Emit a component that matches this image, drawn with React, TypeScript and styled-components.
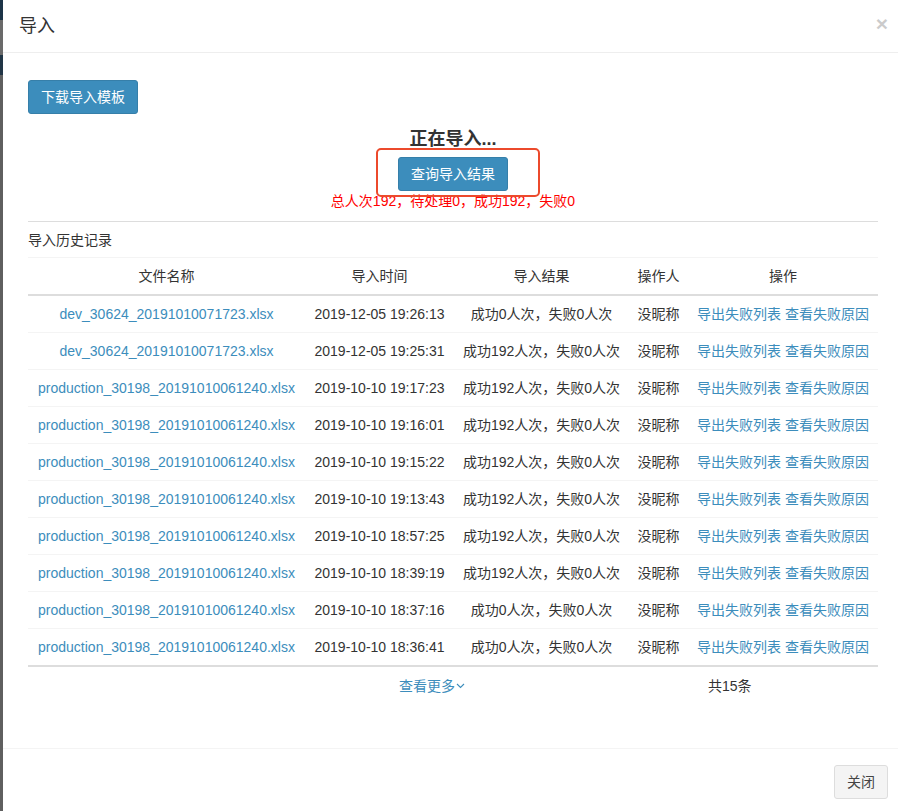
import React from "react";
import styled, { createGlobalStyle } from "styled-components";

const Global = createGlobalStyle`
  html, body { margin: 0; padding: 0; overflow: hidden; background: #5b5b5b; }
  body { font-family: "Liberation Sans", "Noto Sans CJK SC", Arial, sans-serif; color: #333; font-size: 14px; }
  * { box-sizing: border-box; }
`;

const Page = styled.div`
  display: flex;
  width: 898px;
  height: 811px;
  overflow: hidden;
`;

const Backdrop = styled.div`
  flex: 0 0 3px;
  background: linear-gradient(
    to bottom,
    #1d3447 0px, #1d3447 20px,
    #6a6a6a 20px, #6a6a6a 55px,
    #213546 55px, #213546 75px,
    #5f5f5f 75px
  );
`;

const Modal = styled.div`
  flex: 0 0 900px;
  width: 900px;
  background: #fff;
  display: flex;
  flex-direction: column;
`;

const Header = styled.div`
  display: flex;
  align-items: center;
  justify-content: space-between;
  padding: 14px 15px 14px 16px;
  border-bottom: 1px solid #eeeeee;
`;

const Title = styled.h4`
  margin: 0;
  font-size: 18px;
  font-weight: normal;
  line-height: 24px;
  color: #333;
`;

const CloseX = styled.span`
  font-size: 21px;
  font-weight: bold;
  line-height: 18px;
  color: #000;
  opacity: 0.2;
  margin-top: -4px;
`;

const Body = styled.div`
  padding: 27px 25px 52px 25px;
  display: flex;
  flex-direction: column;
  border-bottom: 1px solid #f4f4f4;
`;

const Btn = styled.button<{ $variant?: "primary" | "default" }>`
  font-family: inherit;
  font-size: 14px;
  line-height: 20px;
  padding: 6px 12px;
  border-radius: 3px;
  border: 1px solid ${(p) => (p.$variant === "default" ? "#ddd" : "#367fa9")};
  background: ${(p) => (p.$variant === "default" ? "#f4f4f4" : "#3c8dbc")};
  color: ${(p) => (p.$variant === "default" ? "#444" : "#fff")};
  cursor: pointer;
`;

const TopRow = styled.div`
  display: flex;
`;

const Status = styled.div`
  display: flex;
  flex-direction: column;
  align-items: center;
  margin-top: 13px;
`;

const StatusTitle = styled.div`
  font-size: 18px;
  font-weight: bold;
  line-height: 24px;
  color: #333;
`;

const QueryWrap = styled.div`
  position: relative;
  margin-top: 6px;
`;

const Highlight = styled.div`
  position: absolute;
  left: -22px;
  right: -32px;
  top: -9px;
  bottom: -6px;
  border: 2px solid #ec4a2c;
  border-radius: 5px;
  pointer-events: none;
`;

const Summary = styled.div`
  color: #ff0000;
  font-size: 14px;
  line-height: 20px;
`;

const Rule = styled.div`
  height: 1px;
  background: #dddddd;
  margin-top: 10px;
`;

const SectionTitle = styled.div`
  margin-top: 8px;
  font-size: 14px;
  line-height: 20px;
  color: #333;
`;

const Table = styled.table`
  margin-top: 7px;
  width: 850px;
  border-collapse: collapse;
  table-layout: fixed;
  border-top: 1px solid #f4f4f4;
`;

const Th = styled.th`
  font-weight: normal;
  padding: 8px 0;
  line-height: 20px;
  text-align: center;
  color: #333;
  border-bottom: 2px solid #dddddd;
  white-space: nowrap;
`;

const Tr = styled.tr<{ $last?: boolean }>`
  border-bottom: ${(p) => (p.$last ? "2px solid #dddddd" : "1px solid #f4f4f4")};
`;

const Td = styled.td`
  padding: 8px 0;
  line-height: 20px;
  text-align: center;
  color: #333;
  white-space: nowrap;
`;

const Link = styled.a`
  color: #3c8dbc;
  text-decoration: none;
  cursor: pointer;
`;

const MoreRow = styled.div`
  display: flex;
  align-items: center;
  margin-top: 9px;
  line-height: 20px;
`;

const More = styled(Link)`
  margin-left: 371px;
  display: inline-flex;
  align-items: center;
  gap: 1px;
`;

const Total = styled.span`
  margin-left: 243px;
  color: #333;
`;

const Footer = styled.div`
  display: flex;
  justify-content: flex-end;
  padding: 16px 15px 15px;
`;

type Row = { file: string; time: string; result: string };

const rows: Row[] = [
  { file: "dev_30624_20191010071723.xlsx", time: "2019-12-05 19:26:13", result: "成功0人次，失败0人次" },
  { file: "dev_30624_20191010071723.xlsx", time: "2019-12-05 19:25:31", result: "成功192人次，失败0人次" },
  { file: "production_30198_20191010061240.xlsx", time: "2019-10-10 19:17:23", result: "成功192人次，失败0人次" },
  { file: "production_30198_20191010061240.xlsx", time: "2019-10-10 19:16:01", result: "成功192人次，失败0人次" },
  { file: "production_30198_20191010061240.xlsx", time: "2019-10-10 19:15:22", result: "成功192人次，失败0人次" },
  { file: "production_30198_20191010061240.xlsx", time: "2019-10-10 19:13:43", result: "成功192人次，失败0人次" },
  { file: "production_30198_20191010061240.xlsx", time: "2019-10-10 18:57:25", result: "成功192人次，失败0人次" },
  { file: "production_30198_20191010061240.xlsx", time: "2019-10-10 18:39:19", result: "成功192人次，失败0人次" },
  { file: "production_30198_20191010061240.xlsx", time: "2019-10-10 18:37:16", result: "成功0人次，失败0人次" },
  { file: "production_30198_20191010061240.xlsx", time: "2019-10-10 18:36:41", result: "成功0人次，失败0人次" },
];

export default function App() {
  return (
    <>
      <Global />
      <Page>
        <Backdrop />
        <Modal>
          <Header>
            <Title>导入</Title>
            <CloseX>×</CloseX>
          </Header>
          <Body>
            <TopRow>
              <Btn>下载导入模板</Btn>
            </TopRow>
            <Status>
              <StatusTitle>正在导入...</StatusTitle>
              <QueryWrap>
                <Btn>查询导入结果</Btn>
                <Highlight />
              </QueryWrap>
              <Summary>总人次192，待处理0，成功192，失败0</Summary>
            </Status>
            <Rule />
            <SectionTitle>导入历史记录</SectionTitle>
            <Table>
              <colgroup>
                <col style={{ width: 277 }} />
                <col style={{ width: 149 }} />
                <col style={{ width: 175 }} />
                <col style={{ width: 59 }} />
                <col style={{ width: 190 }} />
              </colgroup>
              <thead>
                <tr>
                  <Th>文件名称</Th>
                  <Th>导入时间</Th>
                  <Th>导入结果</Th>
                  <Th>操作人</Th>
                  <Th>操作</Th>
                </tr>
              </thead>
              <tbody>
                {rows.map((r, i) => (
                  <Tr key={i} $last={i === rows.length - 1}>
                    <Td>
                      <Link>{r.file}</Link>
                    </Td>
                    <Td>{r.time}</Td>
                    <Td>{r.result}</Td>
                    <Td>没昵称</Td>
                    <Td>
                      <Link>导出失败列表</Link> <Link>查看失败原因</Link>
                    </Td>
                  </Tr>
                ))}
              </tbody>
            </Table>
            <MoreRow>
              <More>
                查看更多
                <svg width="9" height="6" viewBox="0 0 9 6" fill="none">
                  <polyline points="1,1 4.5,4.5 8,1" stroke="#3c8dbc" strokeWidth="1.1" />
                </svg>
              </More>
              <Total>共15条</Total>
            </MoreRow>
          </Body>
          <Footer>
            <Btn $variant="default">关闭</Btn>
          </Footer>
        </Modal>
      </Page>
    </>
  );
}
